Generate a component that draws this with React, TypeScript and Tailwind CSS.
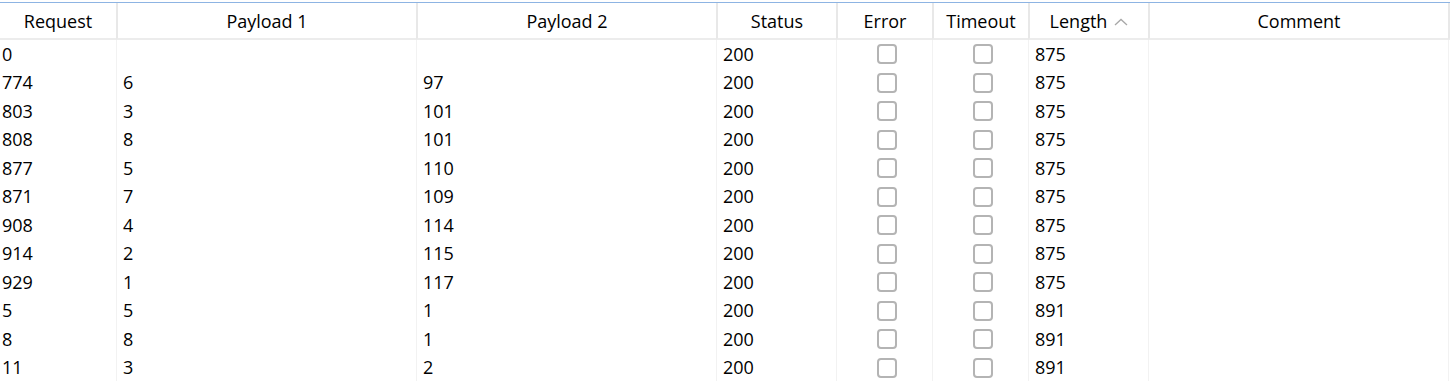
import { Fragment } from 'react';

type Row = {
  request: string;
  payload1: string;
  payload2: string;
  status: string;
  length: string;
};

const rows: Row[] = [
  { request: '0', payload1: '', payload2: '', status: '200', length: '875' },
  { request: '774', payload1: '6', payload2: '97', status: '200', length: '875' },
  { request: '803', payload1: '3', payload2: '101', status: '200', length: '875' },
  { request: '808', payload1: '8', payload2: '101', status: '200', length: '875' },
  { request: '877', payload1: '5', payload2: '110', status: '200', length: '875' },
  { request: '871', payload1: '7', payload2: '109', status: '200', length: '875' },
  { request: '908', payload1: '4', payload2: '114', status: '200', length: '875' },
  { request: '914', payload1: '2', payload2: '115', status: '200', length: '875' },
  { request: '929', payload1: '1', payload2: '117', status: '200', length: '875' },
  { request: '5', payload1: '5', payload2: '1', status: '200', length: '891' },
  { request: '8', payload1: '8', payload2: '1', status: '200', length: '891' },
  { request: '11', payload1: '3', payload2: '2', status: '200', length: '891' },
];

const headers = ['Request', 'Payload 1', 'Payload 2', 'Status', 'Error', 'Timeout', 'Length', 'Comment'];

function Checkbox() {
  return <span className="block h-5 w-5 rounded-[4px] border-2 border-[#b4b4b4] bg-white" />;
}

function SortUp() {
  return (
    <svg width="14" height="8" viewBox="0 0 14 8" className="ml-[7px] mt-[1px]">
      <path d="M1 7 L7 1.5 L13 7" fill="none" stroke="#a8a8a8" strokeWidth="1.3" />
    </svg>
  );
}

export default function App() {
  const cell = 'flex h-[28.5px] items-center border-l border-[#f2f2f2] pl-[6px]';
  const box = 'flex h-[28.5px] items-center justify-center border-l border-[#f2f2f2] pl-1';

  return (
    <div
      className="h-[381px] w-[1450px] overflow-hidden bg-white text-[18px] text-black"
      style={{ fontFamily: '"Open Sans", "Noto Sans", sans-serif' }}
    >
      <div className="h-[2px]" />
      <div className="grid w-[1450px] grid-cols-[116px_300px_300px_120px_96px_96px_120px_300px_2px] border-t border-[#8db4e3]">
        {headers.map((h, i) => (
          <div
            key={h}
            className={`flex h-[37px] items-center justify-center border-b-2 border-b-[#ececec] pt-[1px] ${
              i > 0 ? 'border-l-2 border-l-[#e8e8e8]' : ''
            }`}
          >
            <span>{h}</span>
            {h === 'Length' && <SortUp />}
          </div>
        ))}
        <div className="h-[37px] border-b-2 border-l-2 border-b-[#ececec] border-l-[#e8e8e8]" />
        {rows.map((r, i) => (
          <Fragment key={i}>
            <div className="flex h-[28.5px] items-center pl-[2px]">{r.request}</div>
            <div className={cell}>{r.payload1}</div>
            <div className={cell}>{r.payload2}</div>
            <div className={`${cell} pl-[5px]`}>{r.status}</div>
            <div className={box}>
              <Checkbox />
            </div>
            <div className={box}>
              <Checkbox />
            </div>
            <div className={cell}>{r.length}</div>
            <div className="h-[28.5px] border-l border-[#f2f2f2]" />
            <div className="h-[28.5px] border-l border-[#f2f2f2]" />
          </Fragment>
        ))}
      </div>
    </div>
  );
}
